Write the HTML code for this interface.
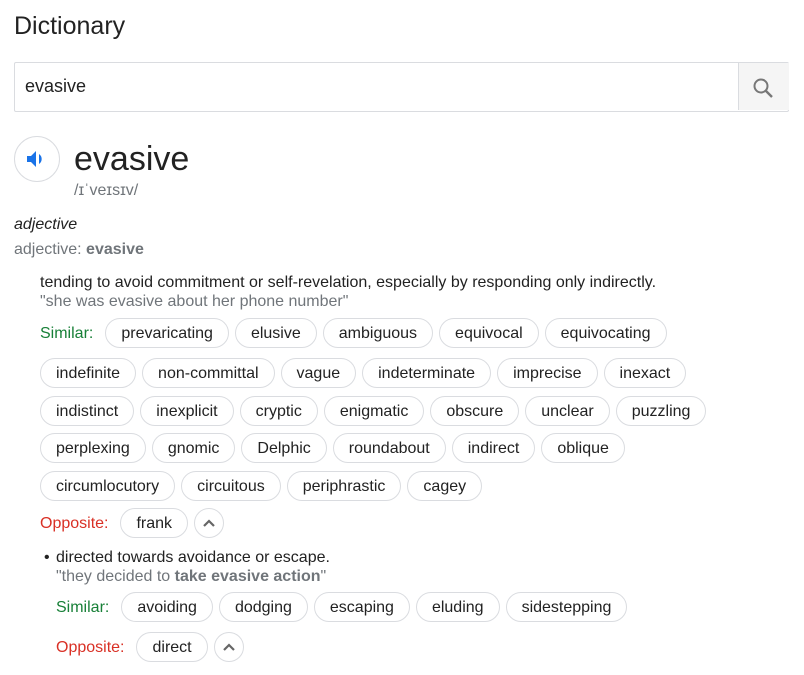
<!DOCTYPE html>
<html><head><meta charset="utf-8"><style>
body{margin:0;width:804px;height:675px;background:#fff;font-family:"Liberation Sans",Arial,sans-serif;color:#222;position:relative;overflow:hidden}
.a{position:absolute;white-space:nowrap}
.row{position:absolute;display:flex;align-items:center;gap:6px;height:30px}
.c{height:28px;line-height:30px;border:1px solid #dadce0;border-radius:15px;padding:0 15px;font-size:16px;color:#222}
.lab{font-size:16px;margin-right:6px;padding-top:2px}
.g{color:#188038}.r{color:#d93025}
.up{width:28px;height:28px;border:1px solid #dadce0;border-radius:50%;display:flex;align-items:center;justify-content:center}
</style></head><body>
<div class="a" style="left:14px;top:12px;font-size:25px;color:#222">Dictionary</div>
<div class="a" style="left:14px;top:62px;width:773px;height:48px;border:1px solid #dadce0;border-radius:2px"></div>
<div class="a" style="left:25px;top:76px;font-size:18px">evasive</div>
<div class="a" style="left:738px;top:63px;width:50px;height:47px;background:#f5f5f5;border-left:1px solid #dadce0"></div>
<svg class="a" style="left:751px;top:76px" width="26" height="24" viewBox="0 0 26 24"><circle cx="10" cy="10" r="6.5" fill="none" stroke="#777" stroke-width="2"/><path d="M14.5 14.5 L21 21" stroke="#777" stroke-width="2.4"/></svg>
<div class="a" style="left:14px;top:136px;width:44px;height:44px;border:1px solid #dadce0;border-radius:50%"></div>
<svg class="a" style="left:25px;top:148px" width="22" height="22" viewBox="0 0 22 22"><path d="M2 8h4l5-5v16l-5-5H2z" fill="#1a73e8"/><path d="M14 6a6 6 0 0 1 0 10z" fill="#1a73e8"/></svg>
<div class="a" style="left:74px;top:140px;font-size:34px;color:#222">evasive</div>
<div class="a" style="left:74px;top:182px;font-size:16px;color:#70757a">/ɪˈveɪsɪv/</div>
<div class="a" style="left:14px;top:216px;font-size:16px;font-style:italic">adjective</div>
<div class="a" style="left:14px;top:241px;font-size:16px;color:#70757a">adjective: <b>evasive</b></div>
<div class="a" style="left:40px;top:274px;font-size:16px">tending to avoid commitment or self-revelation, especially by responding only indirectly.</div>
<div class="a" style="left:40px;top:293px;font-size:16px;color:#70757a">"she was evasive about her phone number"</div>
<div class="row" style="left:40px;top:318px"><span class="lab g">Similar:</span><span class="c">prevaricating</span><span class="c">elusive</span><span class="c">ambiguous</span><span class="c">equivocal</span><span class="c">equivocating</span></div>
<div class="row" style="left:40px;top:358px"><span class="c">indefinite</span><span class="c">non-committal</span><span class="c">vague</span><span class="c">indeterminate</span><span class="c">imprecise</span><span class="c">inexact</span></div>
<div class="row" style="left:40px;top:396px"><span class="c">indistinct</span><span class="c">inexplicit</span><span class="c">cryptic</span><span class="c">enigmatic</span><span class="c">obscure</span><span class="c">unclear</span><span class="c">puzzling</span></div>
<div class="row" style="left:40px;top:433px"><span class="c">perplexing</span><span class="c">gnomic</span><span class="c">Delphic</span><span class="c">roundabout</span><span class="c">indirect</span><span class="c">oblique</span></div>
<div class="row" style="left:40px;top:471px"><span class="c">circumlocutory</span><span class="c">circuitous</span><span class="c">periphrastic</span><span class="c">cagey</span></div>
<div class="row" style="left:40px;top:508px"><span class="lab r">Opposite:</span><span class="c">frank</span><span class="up"><svg width="14" height="10"><path d="M2 8l5-5 5 5" fill="none" stroke="#666" stroke-width="2.2"/></svg></span></div>
<div class="a" style="left:44px;top:549px;font-size:16px">•</div>
<div class="a" style="left:56px;top:549px;font-size:16px">directed towards avoidance or escape.</div>
<div class="a" style="left:56px;top:568px;font-size:16px;color:#70757a">"they decided to <b>take evasive action</b>"</div>
<div class="row" style="left:56px;top:592px"><span class="lab g">Similar:</span><span class="c">avoiding</span><span class="c">dodging</span><span class="c">escaping</span><span class="c">eluding</span><span class="c">sidestepping</span></div>
<div class="row" style="left:56px;top:632px"><span class="lab r">Opposite:</span><span class="c">direct</span><span class="up"><svg width="14" height="10"><path d="M2 8l5-5 5 5" fill="none" stroke="#666" stroke-width="2.2"/></svg></span></div>
</body></html>
